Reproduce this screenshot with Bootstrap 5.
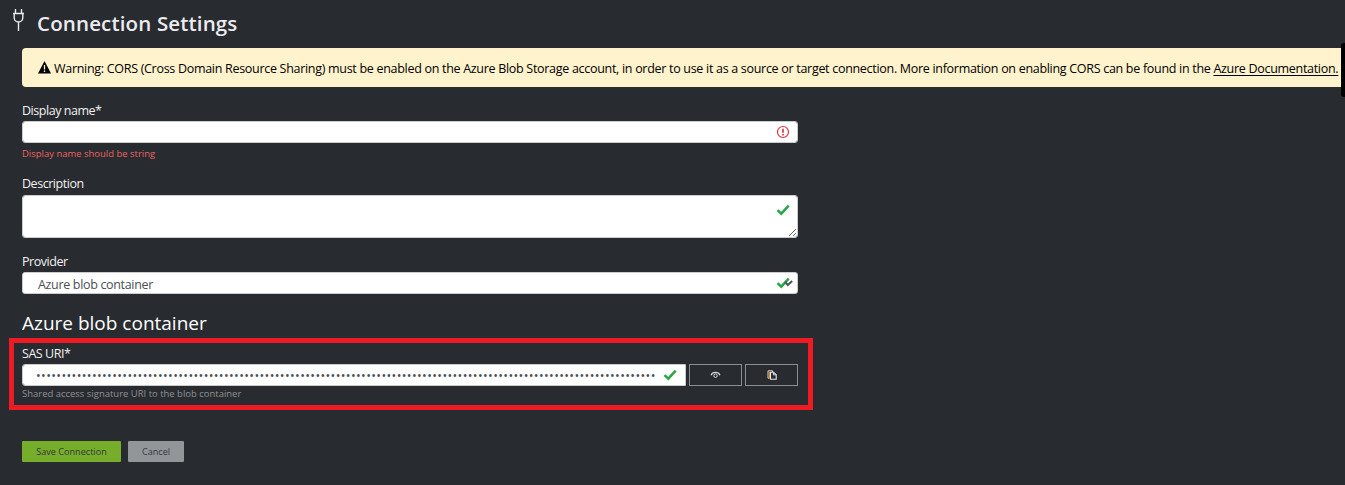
<!DOCTYPE html>
<html lang="en">
<head>
<meta charset="utf-8">
<meta name="viewport" content="width=device-width, initial-scale=1">
<title>Connection Settings</title>
<link rel="stylesheet" href="https://cdn.jsdelivr.net/npm/bootstrap@5.3.0/dist/css/bootstrap.min.css">
<style>
  body { background: #282b2f; color: #f1f1f1; font-family: "Open Sans", "Noto Sans", sans-serif; font-size: 12.5px; height: 485px; }
  .page-head { height: 48px; padding-left: 12px; }
  .page-head svg { margin-top: 8px; }
  .page-title { font-size: 20.5px; font-weight: 600; line-height: 28px; margin: 9px 0 0 12px; letter-spacing: .15px; color: #ececf0; }
  .cors-note { height: 39px; margin-right: 4px; padding: 2px 0 0 16px; background: #fff3cd; color: #000; border: 0; border-radius: 4px 0 0 4px; white-space: nowrap; letter-spacing: -.297px; }
  .cors-note svg { margin: -2px 3px 0 0; }
  .cors-note div { padding-top: 2px; }
  .cors-note a { color: #000; text-underline-offset: 2px; }
  .scroll-thumb { right: 0; top: 43px; width: 4px; height: 54px; background: #000; border-radius: 3px 0 0 3px; }
  .content { padding-left: 22px; }
  .settings-form { width: 776px; }
  .form-label { display: block; height: 18px; line-height: 18px; margin: 0 0 2px; white-space: nowrap; letter-spacing: -.46px; }
  .label-low { height: 20px; line-height: 20px; margin: 0; }
  .form-control, .form-select { border: 1px solid #ccc; border-radius: 3px; min-height: 22px; height: 22px; padding: 0 15px; font-size: 12.5px; line-height: 20px; color: #495057; background-color: #fff; }
  .form-select { background-image: none; letter-spacing: -.33px; padding-top: 2px; }
  textarea.form-control { height: 43px; min-height: 43px; }
  .small-note { font-size: 9.47px; line-height: 14px; height: 14px; white-space: nowrap; }
  .state-icon { right: 8px; top: 4px; pointer-events: none; }
  .section-title { font-size: 19px; font-weight: 400; line-height: 28px; margin: 15px 0 0; color: #fff; }
  .highlight { width: 804px; height: 72px; margin: 1px 0 0 -13px; padding: 2px 10px 0 8px; border: 5px solid #ed1c24; }
  .highlight .form-label { margin-bottom: 1px; }
  .secret { border-radius: 3px 0 0 3px; padding: 1px 0 0 13px; letter-spacing: .38px; }
  .tool-btn { width: 53px; height: 22px; padding: 0; border: 1px solid #8d8d8d; border-radius: 0; }
  .action-btn { height: 21px; padding: 0; border: 0; border-radius: 1px; font-size: 9.1px; line-height: 21px; color: #33373b; }
</style>
</head>
<body class="overflow-hidden position-relative">
<header class="page-head d-flex align-items-start">
  <svg width="13" height="24" viewBox="0 0 13 24" fill="none" stroke="#e6eeee" stroke-width="1.4"><path d="M3.5 1v4M9.5 1v4M1 5.5h11M2.2 5.5v4.2c0 2.6 2 4.3 4.3 4.3s4.3-1.7 4.3-4.3V5.5M6.5 14v9"/></svg>
  <h1 class="page-title">Connection Settings</h1>
</header>
<main class="content">
  <div class="alert cors-note d-flex align-items-center mb-0">
    <svg width="13" height="13" viewBox="0 0 13 13"><path d="M6.5 0 13 12.4H0z" fill="#000"/><path d="M6.5 4v4.5M6.5 9.6V11" stroke="#fff3cd" stroke-width="1.3"/></svg>
    <div>Warning: CORS (Cross Domain Resource Sharing) must be enabled on the Azure Blob Storage account, in order to use it as a source or target connection. More information on enabling CORS can be found in the <a href="#">Azure Documentation.</a></div>
  </div>
  <form class="settings-form">
    <div style="padding-top:14px">
      <label class="form-label label-low" for="name">Display name*</label>
      <div class="position-relative">
        <input class="form-control" id="name" type="text">
        <svg class="state-icon position-absolute" width="14" height="14" viewBox="0 0 14 14" fill="none" stroke="#dc3545"><circle cx="7" cy="7" r="5.5" stroke-width="1.2"/><path d="M7 3.7v4M7 9v1.5" stroke-width="1.7"/></svg>
      </div>
      <div class="small-note mt-1" style="color:#ea6461">Display name should be string</div>
    </div>
    <div style="padding-top:14px">
      <label class="form-label" for="desc">Description</label>
      <div class="position-relative d-flex">
        <textarea class="form-control" id="desc"></textarea>
        <svg class="state-icon position-absolute" style="top:8px" width="14" height="14" viewBox="0 0 14 14"><path d="M1.5 7.2 5.3 10.7 12.7 2.7" fill="none" stroke="#28a745" stroke-width="2.5"/></svg>
      </div>
    </div>
    <div style="padding-top:14px">
      <label class="form-label label-low" for="provider">Provider</label>
      <div class="position-relative d-flex">
        <div class="form-select" id="provider">Azure blob container</div>
        <svg class="state-icon position-absolute" style="right:4px" width="18" height="14" viewBox="0 0 18 14" fill="none"><path d="M1.5 7.2 5.3 10.7 12.7 2.7" stroke="#28a745" stroke-width="2.5"/><path d="M9 5.8 11.8 9 16.2 5" stroke="#50545c" stroke-width="2"/></svg>
      </div>
    </div>
    <h2 class="section-title">Azure blob container</h2>
    <div class="highlight">
      <label class="form-label" for="sas">SAS URI*</label>
      <div class="d-flex">
        <div class="position-relative" style="width:664px;margin-right:3px">
          <input class="form-control secret" id="sas" type="password" value="aaaaaaaaaaaaaaaaaaaaaaaaaaaaaaaaaaaaaaaaaaaaaaaaaaaaaaaaaaaaaaaaaaaaaaaaaaaaaaaaaaaaaaaaaaaaaaaaaaaaaaaaaaaaaaaaaaaaaaaaaa">
          <svg class="state-icon position-absolute" style="right:9px" width="14" height="14" viewBox="0 0 14 14"><path d="M1.5 7.2 5.3 10.7 12.7 2.7" fill="none" stroke="#28a745" stroke-width="2.5"/></svg>
        </div>
        <button class="btn tool-btn d-flex align-items-center justify-content-center" type="button" aria-label="Show" style="margin-right:3px"><svg width="11" height="8" viewBox="0 0 11 8" fill="none" stroke="#d8d8d8"><path d="M1 4.2C2.6.4 8.4.4 10 4.2" stroke-width="1.2"/><circle cx="5.5" cy="4.7" r="1.7"/></svg></button>
        <button class="btn tool-btn d-flex align-items-center justify-content-center" type="button" aria-label="Copy"><svg width="10" height="10" viewBox="0 0 10 10" fill="none"><path d="M2.2 8.2H1V.8h4.5V2" stroke="#e4d4bd"/><path d="M2.4 2v6.5" stroke="#d99535"/><path d="M3.5 2.2h3.1l2.6 2.5v4.6H3.5z" stroke="#e8e8e8" stroke-width="1.1"/><path d="M6.4 2.4v2.4h2.5" stroke="#e8e8e8"/></svg></button>
      </div>
      <div class="small-note" style="color:#8f9295;margin-top:1px">Shared access signature URI to the blob container</div>
    </div>
    <div class="d-flex" style="margin-top:31px">
      <button class="btn action-btn" type="button" style="width:99px;background:#76ad2a;margin-right:7px">Save Connection</button>
      <button class="btn action-btn" type="button" style="width:56px;background:#929699">Cancel</button>
    </div>
  </form>
</main>
<div class="scroll-thumb position-absolute"></div>
<script src="https://cdn.jsdelivr.net/npm/bootstrap@5.3.0/dist/js/bootstrap.bundle.min.js"></script>
</body>
</html>
